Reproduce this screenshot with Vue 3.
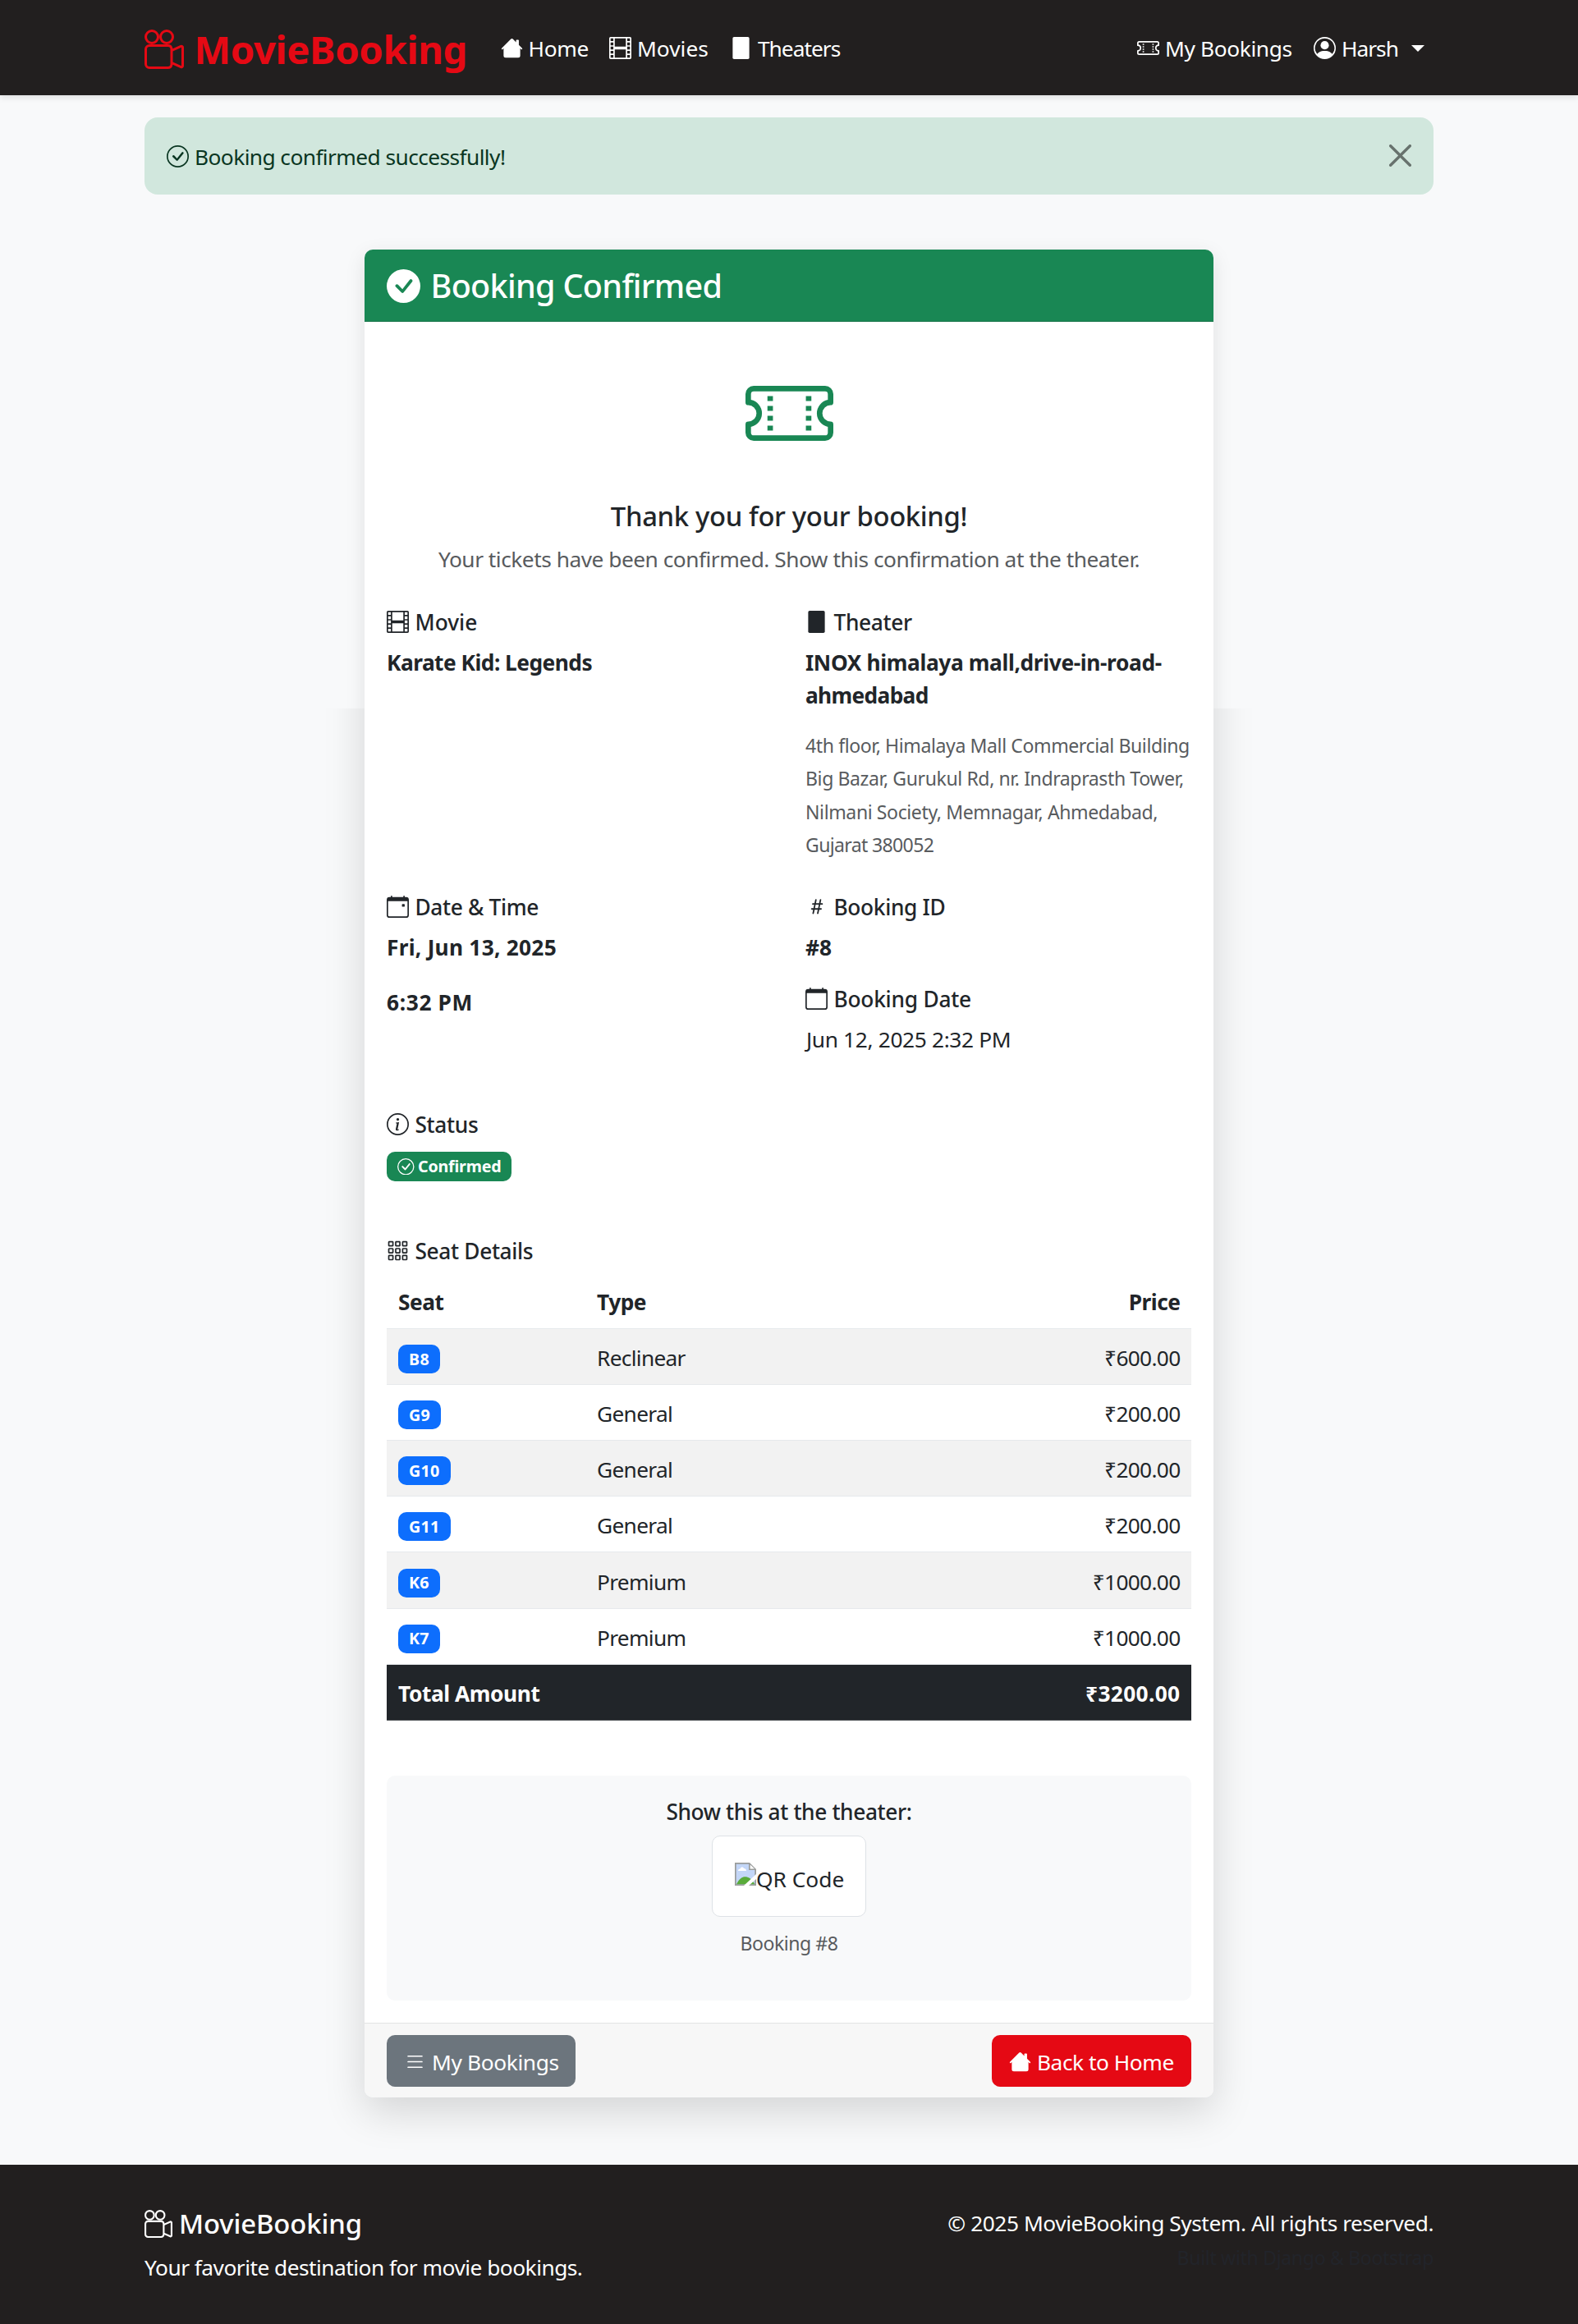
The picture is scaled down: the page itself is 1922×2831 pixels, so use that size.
<script setup>
import { h } from 'vue'

const CIRCLE = 'M8 15A7 7 0 1 1 8 1a7 7 0 0 1 0 14m0 1A8 8 0 1 0 8 0a8 8 0 0 0 0 16'
const CALENDAR = 'M3.5 0a.5.5 0 0 1 .5.5V1h8V.5a.5.5 0 0 1 1 0V1h1a2 2 0 0 1 2 2v11a2 2 0 0 1-2 2H2a2 2 0 0 1-2-2V3a2 2 0 0 1 2-2h1V.5a.5.5 0 0 1 .5-.5M1 4v10a1 1 0 0 0 1 1h12a1 1 0 0 0 1-1V4z'
const icons = {
  reels: [
    'M6 3a3 3 0 1 1-6 0 3 3 0 0 1 6 0M1 3a2 2 0 1 0 4 0 2 2 0 0 0-4 0',
    'M9 6h.5a2 2 0 0 1 1.983 1.738l3.11-1.382A1 1 0 0 1 16 7.269v7.462a1 1 0 0 1-1.406.913l-3.111-1.382A2 2 0 0 1 9.5 16H2a2 2 0 0 1-2-2V8a2 2 0 0 1 2-2zm6 8.73V7.27l-3.5 1.555v4.35zM1 8v6a1 1 0 0 0 1 1h7.5a1 1 0 0 0 1-1V8a1 1 0 0 0-1-1H2a1 1 0 0 0-1 1',
    'M9 6a3 3 0 1 0 0-6 3 3 0 0 0 0 6M7 3a2 2 0 1 1 4 0 2 2 0 0 1-4 0',
  ],
  house: [
    'M8.707 1.5a1 1 0 0 0-1.414 0L.646 8.146a.5.5 0 0 0 .708.708L2 8.2v5.3A1.5 1.5 0 0 0 3.5 15h9a1.5 1.5 0 0 0 1.5-1.5V8.2l.646.654a.5.5 0 0 0 .708-.708L13 5.793V2.5a.5.5 0 0 0-.5-.5h-1a.5.5 0 0 0-.5.5v1.293z',
  ],
  film: [
    'M0 1a1 1 0 0 1 1-1h14a1 1 0 0 1 1 1v14a1 1 0 0 1-1 1H1a1 1 0 0 1-1-1zm4 0v6h8V1zm8 8H4v6h8zM1 1v2h2V1zm2 3H1v2h2zM1 7v2h2V7zm2 3H1v2h2zm-2 3v2h2v-2zM15 1h-2v2h2zm-2 3v2h2V4zm2 3h-2v2h2zm-2 3v2h2v-2zm2 3h-2v2h2z',
  ],
  building: ['M3 0h10a1 1 0 0 1 1 1v14a1 1 0 0 1-1 1H3a1 1 0 0 1-1-1V1a1 1 0 0 1 1-1z'],
  ticket: [
    'M4 4.85v.9h1v-.9zm7 0v.9h1v-.9zm-7 1.8v.9h1v-.9zm7 0v.9h1v-.9zm-7 1.8v.9h1v-.9zm7 0v.9h1v-.9zm-7 1.8v.9h1v-.9zm7 0v.9h1v-.9z',
    'M1.5 3A1.5 1.5 0 0 0 0 4.5V6a.5.5 0 0 0 .5.5 1.5 1.5 0 1 1 0 3 .5.5 0 0 0-.5.5v1.5A1.5 1.5 0 0 0 1.5 13h13a1.5 1.5 0 0 0 1.5-1.5V10a.5.5 0 0 0-.5-.5 1.5 1.5 0 0 1 0-3A.5.5 0 0 0 16 6V4.5A1.5 1.5 0 0 0 14.5 3zM1 4.5a.5.5 0 0 1 .5-.5h13a.5.5 0 0 1 .5.5v1.05a2.5 2.5 0 0 0 0 4.9v1.05a.5.5 0 0 1-.5.5h-13a.5.5 0 0 1-.5-.5v-1.05a2.5 2.5 0 0 0 0-4.9z',
  ],
  person: [
    'M11 6a3 3 0 1 1-6 0 3 3 0 0 1 6 0',
    'M0 8a8 8 0 1 1 16 0A8 8 0 0 1 0 8m8-7a7 7 0 0 0-5.468 11.37C3.242 11.226 4.805 10 8 10s4.757 1.225 5.468 2.37A7 7 0 0 0 8 1',
  ],
  check: [
    CIRCLE,
    'm10.97 4.97-.02.022-3.473 4.425-2.093-2.094a.75.75 0 0 0-1.06 1.06L6.97 11.03a.75.75 0 0 0 1.079-.02l3.992-4.99a.75.75 0 0 0-1.071-1.05',
  ],
  checkFill: [
    'M16 8A8 8 0 1 1 0 8a8 8 0 0 1 16 0m-3.97-3.03a.75.75 0 0 0-1.08.022L7.477 9.417 5.384 7.323a.75.75 0 0 0-1.06 1.06L6.97 11.03a.75.75 0 0 0 1.079-.02l3.992-4.99a.75.75 0 0 0-.01-1.05z',
  ],
  close: [
    'M.293.293a1 1 0 0 1 1.414 0L8 6.586 14.293.293a1 1 0 1 1 1.414 1.414L9.414 8l6.293 6.293a1 1 0 0 1-1.414 1.414L8 9.414l-6.293 6.293a1 1 0 0 1-1.414-1.414L6.586 8 .293 1.707a1 1 0 0 1 0-1.414',
  ],
  calendar: [CALENDAR],
  calendarEvent: [
    CALENDAR,
    'M11 6.5a.5.5 0 0 1 .5-.5h1a.5.5 0 0 1 .5.5v1a.5.5 0 0 1-.5.5h-1a.5.5 0 0 1-.5-.5z',
  ],
  hash: [
    'M8.39 12.648a1 1 0 0 0-.015.18c0 .305.21.508.5.508.266 0 .492-.172.555-.477l.554-2.703h1.204c.421 0 .617-.234.617-.547 0-.312-.188-.53-.617-.53h-.985l.516-2.524h1.265c.43 0 .618-.227.618-.547 0-.313-.188-.524-.618-.524h-1.046l.476-2.304a1 1 0 0 0 .016-.164.51.51 0 0 0-.516-.516.54.54 0 0 0-.539.43l-.523 2.554H7.617l.477-2.304c.008-.04.015-.118.015-.164a.51.51 0 0 0-.523-.516.54.54 0 0 0-.531.43L6.53 5.484H5.414c-.43 0-.617.22-.617.532s.187.539.617.539h.906l-.515 2.523H4.609c-.421 0-.609.219-.609.531s.188.547.61.547h.976l-.516 2.492c-.008.04-.015.125-.015.18 0 .305.21.508.5.508.265 0 .492-.172.554-.477l.555-2.703h2.242zm-1-6.109h2.266l-.515 2.563H6.859l.532-2.563z',
  ],
  info: [
    CIRCLE,
    'm8.93 6.588-2.29.287-.082.38.45.083c.294.07.352.176.288.469l-.738 3.468c-.194.897.105 1.319.808 1.319.545 0 1.178-.252 1.465-.598l.088-.416c-.2.176-.492.246-.686.246-.275 0-.375-.193-.304-.533zM9 4.5a1 1 0 1 1-2 0 1 1 0 0 1 2 0',
  ],
  grid: [1, 6, 11].flatMap((y) =>
    [1, 6, 11].map((x) => `M${x + 0.6} ${y}h2.8l.6.6v2.8l-.6.6h-2.8l-.6-.6v-2.8zm.4 1v2h2v-2z`)
  ),
  list: ['M3 3.5h10a.5.5 0 0 1 0 1H3a.5.5 0 0 1 0-1zm0 4h10a.5.5 0 0 1 0 1H3a.5.5 0 0 1 0-1zm0 4h10a.5.5 0 0 1 0 1H3a.5.5 0 0 1 0-1z'],
}

const Icon = (props) =>
  h(
    'svg',
    { viewBox: '0 0 16 16', width: props.size || 27, height: props.size || 27, fill: 'currentColor', 'fill-rule': 'evenodd', 'aria-hidden': 'true' },
    icons[props.name].map((d) => h('path', { d }))
  )
Icon.props = ['name', 'size']

const seats = [
  { seat: 'B8', type: 'Reclinear', price: '₹600.00' },
  { seat: 'G9', type: 'General', price: '₹200.00' },
  { seat: 'G10', type: 'General', price: '₹200.00' },
  { seat: 'G11', type: 'General', price: '₹200.00' },
  { seat: 'K6', type: 'Premium', price: '₹1000.00' },
  { seat: 'K7', type: 'Premium', price: '₹1000.00' },
]
</script>

<template>
  <div class="page">
    <nav class="nav">
      <a class="brand"><Icon name="reels" :size="48" /><span>MovieBooking</span></a>
      <a class="link home"><Icon name="house" /><span>Home</span></a>
      <a class="link movies"><Icon name="film" /><span>Movies</span></a>
      <a class="link theaters"><Icon name="building" /><span>Theaters</span></a>
      <a class="link bookings"><Icon name="ticket" /><span>My Bookings</span></a>
      <a class="link user"><Icon name="person" /><span>Harsh</span><i class="caret"></i></a>
    </nav>

    <main>
      <div class="alert">
        <Icon name="check" /><span class="message">Booking confirmed successfully!</span>
        <button class="close" aria-label="Close"><Icon name="close" /></button>
      </div>

      <section class="card">
        <header class="card-head"><Icon name="checkFill" :size="41" /><h4>Booking Confirmed</h4></header>

        <div class="card-body">
          <div class="hero">
            <Icon name="ticket" :size="107" />
            <h5>Thank you for your booking!</h5>
            <p>Your tickets have been confirmed. Show this confirmation at the theater.</p>
          </div>

          <div class="row first">
            <div class="col">
              <h6 class="label movie"><Icon name="film" /><span>Movie</span></h6>
              <p class="strong karate">Karate Kid: Legends</p>
            </div>
            <div class="col">
              <h6 class="label"><Icon name="building" /><span>Theater</span></h6>
              <p class="strong inox">INOX himalaya mall,drive-in-road-<br /><span class="tight">ahmedabad</span></p>
              <p class="address">
                4th floor, Himalaya Mall Commercial Building<br />Big Bazar, Gurukul Rd, nr. Indraprasth Tower,<br />Nilmani Society, Memnagar, Ahmedabad,<br /><span class="tight">Gujarat 380052</span>
              </p>
            </div>
          </div>

          <div class="row second">
            <div class="col">
              <h6 class="label"><Icon name="calendarEvent" /><span>Date &amp; Time</span></h6>
              <p class="strong date">Fri, Jun 13, 2025</p>
              <p class="strong time">6:32 PM</p>
            </div>
            <div class="col">
              <h6 class="label"><Icon name="hash" /><span>Booking ID</span></h6>
              <p class="strong id">#8</p>
              <h6 class="label booked"><Icon name="calendar" /><span>Booking Date</span></h6>
              <p class="plain">Jun 12, 2025 2:32 PM</p>
            </div>
          </div>

          <div class="status">
            <h6 class="label"><Icon name="info" /><span>Status</span></h6>
            <span class="badge ok"><Icon name="check" :size="20.5" /><span>Confirmed</span></span>
          </div>

          <div class="seats">
            <h6 class="label"><Icon name="grid" /><span>Seat Details</span></h6>
            <div class="tr th"><span class="c1">Seat</span><span class="c2">Type</span><span class="c3">Price</span></div>
            <div v-for="(s, i) in seats" :key="s.seat" class="tr" :class="{ odd: i % 2 === 0 }">
              <span class="c1"><span class="badge seat">{{ s.seat }}</span></span>
              <span class="c2">{{ s.type }}</span>
              <span class="c3">{{ s.price }}</span>
            </div>
            <div class="tr total"><span>Total Amount</span><span class="c3">₹3200.00</span></div>
          </div>

          <div class="qr">
            <h6>Show this at the theater:</h6>
            <div class="frame">
              <svg class="broken" viewBox="0 0 26 28" width="26" height="28" aria-hidden="true">
                <path d="M0 0H18L26 8V28H0z" fill="#9a9c9b" />
                <path d="M1.7 1.7H17V9H24.3V26.3H1.7z" fill="#c3d6f7" />
                <path d="M18.7 2.4 24 7.6H18.7z" fill="#fff" />
                <path d="M4 10c0-2 1.800-2.600 2.600-2.500C7.300 5 10 5 11 7c2 0 3 1.400 3 3z" fill="#fff" />
                <path d="M2 26.300C5 20 8.500 17.200 12.500 17.200S20 19 24.300 26.300z" fill="#59ab3a" />
                <path d="M26 14V20L17 28H11z" fill="#fff" />
              </svg>
              <span>QR Code</span>
            </div>
            <small>Booking #8</small>
          </div>
        </div>

        <footer class="card-foot">
          <a class="btn gray"><Icon name="list" /><span>My Bookings</span></a>
          <a class="btn red"><Icon name="house" /><span>Back to Home</span></a>
        </footer>
      </section>
    </main>

    <footer class="foot">
      <div>
        <h5><Icon name="reels" :size="34" /><span>MovieBooking</span></h5>
        <p class="tagline">Your favorite destination for movie bookings.</p>
      </div>
      <div class="right">
        <p>© 2025 MovieBooking System. All rights reserved.</p>
        <small>Built with Django &amp; Bootstrap</small>
      </div>
    </footer>
  </div>
</template>

<style>
body { margin: 0; background: #f8f9fa; }
</style>

<style scoped>
* { box-sizing: border-box; }
h4, h5, h6, p { margin: 0; font-size: inherit; }
svg { display: block; flex: none; }
.page {
  width: 1922px;
  height: 2831px;
  display: flex;
  flex-direction: column;
  background: #f8f9fa;
  color: #212529;
  font-family: "Noto Sans", "Open Sans", sans-serif;
  font-size: 26.3px;
  line-height: 40px;
  white-space: nowrap;
}
.nav {
  height: 116px;
  flex: none;
  padding: 0 176px;
  display: flex;
  background: #221f1f;
  color: #fff;
  box-shadow: 0 3px 7px rgba(0, 0, 0, 0.1);
}
.brand, .link { display: flex; align-items: center; height: 117px; }
.brand {
  width: 433.5px;
  height: 120px;
  gap: 12.5px;
  color: #e50914;
  font-size: 47.3px;
  font-weight: 700;
  letter-spacing: -0.4px;
}
.link { gap: 7px; }
.home { width: 132.5px; letter-spacing: -0.3px; }
.movies { width: 146.5px; }
.theaters { gap: 7.5px; letter-spacing: -1px; }
.bookings { margin-left: auto; width: 215px; letter-spacing: -0.38px; }
.user { width: 146px; letter-spacing: -1px; }
.caret {
  margin-left: 9px;
  border: 8px solid transparent;
  border-top-color: #fff;
  border-bottom: 0;
}
main { flex: 1; padding: 27px 176px 0; }
.alert {
  height: 94px;
  padding: 0 27px;
  display: flex;
  align-items: center;
  gap: 7px;
  border-radius: 16px;
  background: #d1e7dd;
  color: #0a3622;
  letter-spacing: -0.58px;
}
.message { padding-top: 2px; }
.close {
  margin: 0 0 2px auto;
  padding: 0;
  border: 0;
  background: none;
  color: #000;
  opacity: 0.5;
}
.card {
  position: relative;
  isolation: isolate;
  width: 1034px;
  margin: 67px auto 0;
  border-radius: 10px;
}
/* The drop shadow is light beside the top of the card and deeper below it. */
.card::before, .card::after {
  content: "";
  position: absolute;
  inset: 0;
  z-index: -1;
  border-radius: 10px;
}
.card::before {
  box-shadow: 0 7px 24px rgba(0, 0, 0, 0.1);
  clip-path: inset(-60px -60px calc(100% - 559px) -60px);
}
.card::after {
  box-shadow: 0 17px 50px rgba(0, 0, 0, 0.15);
  clip-path: inset(559px -90px -90px -90px);
}
.card-head {
  height: 88px;
  padding: 1px 27px 0;
  display: flex;
  align-items: center;
  gap: 12.5px;
  border-bottom: 1px solid #157347;
  border-radius: 10px 10px 0 0;
  background: #198754;
  color: #fff;
  font-size: 39.5px;
}
.card-head h4 { font-weight: 500; letter-spacing: -0.68px; }
.card-body { height: 2072px; padding: 58px 27px 0; background: #fff; }
.hero { display: flex; flex-direction: column; align-items: center; }
.hero svg { color: #198754; }
.hero h5 { margin-top: 52px; font-size: 32.8px; font-weight: 500; letter-spacing: -0.34px; }
.hero p { margin-top: 12px; color: #585b5e; letter-spacing: -0.49px; }
.row { display: grid; grid-template-columns: 510px 1fr; }
.first { margin-top: 41px; height: 347px; }
.second { height: 265px; }
.label {
  height: 31px;
  margin-bottom: 14px;
  display: flex;
  align-items: center;
  gap: 7.5px;
  font-weight: 500;
  letter-spacing: -0.35px;
}
.movie { letter-spacing: 0; }
.strong { font-weight: 700; letter-spacing: -0.45px; }
.karate { letter-spacing: -0.52px; }
.inox { letter-spacing: -0.36px; }
.tight { letter-spacing: -0.65px; }
.address {
  margin-top: 21px;
  font-size: 23.05px;
  line-height: 40.25px;
  color: #585b5e;
  letter-spacing: -0.4px;
}
.date { letter-spacing: 0.25px; }
.time { margin-top: 27px; letter-spacing: 0.65px; }
.id { letter-spacing: 0; }
.booked { margin-top: 27px; letter-spacing: -0.23px; }
.plain { padding-left: 1px; letter-spacing: -0.35px; }
.status { height: 154px; }
.badge {
  display: inline-flex;
  align-items: center;
  height: 35px;
  padding: 0 13px;
  border-radius: 10px;
  color: #fff;
  font-size: 19.7px;
  font-weight: 700;
  vertical-align: top;
}
.ok { margin-top: 4px; height: 36px; gap: 4.5px; background: #198754; letter-spacing: -0.23px; }
.seat { background: #0d6efd; letter-spacing: 0.3px; }
.seats .label { margin-bottom: 12px; }
.tr {
  height: 68.1px;
  padding: 3px 13.5px 0 14px;
  display: flex;
  align-items: center;
  border-bottom: 1px solid #e6e9ec;
  letter-spacing: -0.7px;
}
.odd { background: #f2f2f2; }
.th { font-weight: 700; letter-spacing: -0.5px; }
.c1 { width: 242px; display: flex; padding-top: 3px; }
.th .c1 { padding-top: 0; }
.c3 { margin-left: auto; }
.total {
  background: #212529;
  border-color: #4d5154;
  color: #fff;
  font-weight: 700;
  letter-spacing: -0.42px;
}
.total .c3 { letter-spacing: 0.35px; }
.qr {
  height: 274px;
  margin-top: 67px;
  padding-top: 24px;
  display: flex;
  flex-direction: column;
  align-items: center;
  border-radius: 10px;
  background: #f8f9fa;
}
.qr h6 { font-weight: 500; letter-spacing: -0.37px; }
.frame {
  width: 188px;
  height: 99px;
  margin: 9px 0 12px;
  padding: 7px 0 0 27px;
  display: flex;
  align-items: center;
  border: 1px solid #dee2e6;
  border-radius: 10px;
  background: #fff;
}
.broken { margin-top: -12px; }
.qr small { font-size: 23.05px; color: #585b5e; letter-spacing: -0.46px; }
.card-foot {
  height: 91px;
  padding: 14px 27px 0;
  display: flex;
  justify-content: space-between;
  border-top: 1px solid #e2e3e4;
  border-radius: 0 0 10px 10px;
  background: #f7f7f7;
}
.btn {
  height: 63px;
  padding: 2px 0 0 21px;
  display: flex;
  align-items: center;
  gap: 7px;
  border-radius: 10px;
  color: #fff;
}
.gray { width: 230px; background: #6c757d; letter-spacing: -0.38px; }
.red { width: 243px; background: #e50914; letter-spacing: -0.47px; }
.foot {
  height: 194px;
  flex: none;
  padding: 0 176px;
  display: flex;
  justify-content: space-between;
  background: #221f1f;
  color: #fff;
}
.foot h5 {
  margin-top: 52px;
  display: flex;
  align-items: center;
  gap: 8px;
  font-size: 32.8px;
  font-weight: 500;
  letter-spacing: -0.1px;
}
.tagline { margin-top: 13px; letter-spacing: -0.52px; }
.right { text-align: right; }
.right p { margin-top: 51px; letter-spacing: -0.45px; }
.right small { display: block; margin-top: 2px; font-size: 23.05px; color: #22242a; letter-spacing: -0.32px; }
</style>
